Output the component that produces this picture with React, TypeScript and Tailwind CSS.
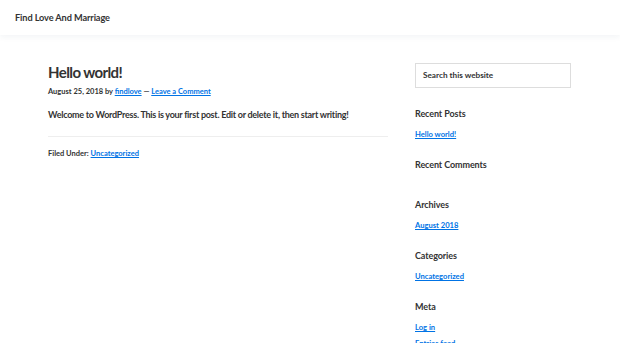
import React from 'react';

const font = { fontFamily: 'Lato, "Liberation Sans", sans-serif' };

function Widget({ title, links }: { title: string; links: string[] }) {
    return (
        <section className="mb-[19px]">
            <h3 className="text-[9px] font-bold leading-[12px] tracking-[-0.1px] text-[#333]">{title}</h3>
            <ul className="mt-[8px] flex flex-col gap-[4px]">
                {links.map((l) => (
                    <li key={l} className="text-[7.6px] leading-[12px]">
                        <a href="#" className="font-bold text-[#0073e5] underline">
                            {l}
                        </a>
                    </li>
                ))}
            </ul>
        </section>
    );
}

export default function App() {
    return (
        <div className="h-[343px] overflow-hidden bg-white text-[#333]" style={font}>
            {/* Header */}
            <header className="flex h-[35px] items-center px-[15px] shadow-[0_2px_6px_rgba(30,60,110,0.06)]">
                <a href="#" className="text-[9.2px] font-bold tracking-[-0.1px] text-[#333]">
                    Find Love And Marriage
                </a>
            </header>

            <div className="flex gap-[27px] pt-[28px] pl-[48px] pr-[49px]">
                {/* Content */}
                <main className="w-[340px]">
                    <h1 className="text-[15px] font-bold leading-[18px] tracking-[-0.6px] text-[#333]">
                        Hello world!
                    </h1>
                    <p className="mt-[5px] text-[7.5px] font-bold leading-[12px]">
                        August 25, 2018 by{' '}
                        <a href="#" className="text-[#0073e5] underline">
                            findlove
                        </a>{' '}
                        —{' '}
                        <a href="#" className="text-[#0073e5] underline">
                            Leave a Comment
                        </a>
                    </p>
                    <p className="mt-[11px] text-[9px] font-bold leading-[12px] tracking-[-0.27px]">
                        Welcome to WordPress. This is your first post. Edit or delete it, then start writing!
                    </p>
                    <div className="mt-[15px] border-t border-[#eee] pt-[11px] text-[7.5px] font-bold leading-[12px]">
                        Filed Under:{' '}
                        <a href="#" className="text-[#0073e5] underline">
                            Uncategorized
                        </a>
                    </div>
                </main>

                {/* Sidebar */}
                <aside className="w-[156px]">
                    <div className="flex h-[25px] items-center border border-[#ddd] px-[7px] text-[8.2px] font-bold text-[#333]">
                        Search this website
                    </div>
                    <div className="mt-[20px]">
                        <Widget title="Recent Posts" links={['Hello world!']} />
                        <section className="mb-[28px]">
                            <h3 className="text-[9px] font-bold leading-[12px] tracking-[-0.1px]">Recent Comments</h3>
                        </section>
                        <Widget title="Archives" links={['August 2018']} />
                        <Widget title="Categories" links={['Uncategorized']} />
                        <Widget title="Meta" links={['Log in', 'Entries feed']} />
                    </div>
                </aside>
            </div>
        </div>
    );
}
